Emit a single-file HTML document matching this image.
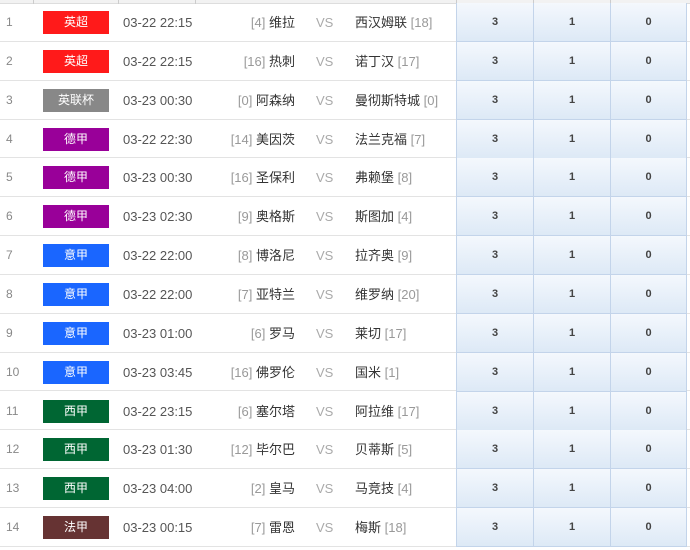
<!DOCTYPE html>
<html><head><meta charset="utf-8"><style>
*{margin:0;padding:0;box-sizing:border-box}
body{width:690px;height:550px;background:#fff;position:relative;overflow:hidden;font-family:"Liberation Sans","Noto Sans CJK SC",sans-serif;font-size:13px;color:#333}
.hd{position:absolute;left:0;top:0;width:690px;height:4px;background:#f2f2f2;border-bottom:1px solid #ddd}
.hd i{position:absolute;top:0;width:1px;height:4px;background:#ccc}
.r{position:absolute;left:0;width:690px;height:38.85px;border-bottom:1px solid #e3e3e3}
.r>*{position:absolute;top:0;line-height:39px}
.n{left:6px;color:#888;font-size:12px}
.b{left:43px;top:8px!important;width:66px;height:23px;line-height:23px!important;color:#fff;text-align:center;font-size:12px}
.t{left:123px;color:#555}
.h{right:395px;color:#333;white-space:nowrap}
.v{left:316px;color:#aaa}
.a{left:355px;color:#333;white-space:nowrap}
.g{color:#999}
.o{width:77px;height:39px;background:linear-gradient(#f4f8fd,#dde9f6);border-left:1px solid #c3d4ea;border-bottom:1px solid #c3d4ea;text-align:center;font-weight:bold;font-size:11px;color:#444}
.o1{left:456px}.o2{left:533px}.o3{left:610px;border-right:1px solid #c3d4ea}
.red{background:#ff1a1a}.gr{background:#888}.pu{background:#990099}.bl{background:#1a66ff}.gn{background:#006633}.br{background:#663333}
</style></head><body>
<div class="hd"><i style="left:33px"></i><i style="left:118px"></i><i style="left:195px"></i><i style="left:456px"></i><i style="left:533px"></i><i style="left:610px"></i></div>

<div class="r" style="top:3px"><span class="n">1</span><span class="b red">英超</span><span class="t">03-22 22:15</span><span class="h"><span class="g">[4]</span> 维拉</span><span class="v">VS</span><span class="a">西汉姆联 <span class="g">[18]</span></span><span class="o o1">3</span><span class="o o2">1</span><span class="o o3">0</span></div>
<div class="r" style="top:41.85px"><span class="n">2</span><span class="b red">英超</span><span class="t">03-22 22:15</span><span class="h"><span class="g">[16]</span> 热刺</span><span class="v">VS</span><span class="a">诺丁汉 <span class="g">[17]</span></span><span class="o o1">3</span><span class="o o2">1</span><span class="o o3">0</span></div>
<div class="r" style="top:80.7px"><span class="n">3</span><span class="b gr">英联杯</span><span class="t">03-23 00:30</span><span class="h"><span class="g">[0]</span> 阿森纳</span><span class="v">VS</span><span class="a">曼彻斯特城 <span class="g">[0]</span></span><span class="o o1">3</span><span class="o o2">1</span><span class="o o3">0</span></div>
<div class="r" style="top:119.55px"><span class="n">4</span><span class="b pu">德甲</span><span class="t">03-22 22:30</span><span class="h"><span class="g">[14]</span> 美因茨</span><span class="v">VS</span><span class="a">法兰克福 <span class="g">[7]</span></span><span class="o o1">3</span><span class="o o2">1</span><span class="o o3">0</span></div>
<div class="r" style="top:158.4px"><span class="n">5</span><span class="b pu">德甲</span><span class="t">03-23 00:30</span><span class="h"><span class="g">[16]</span> 圣保利</span><span class="v">VS</span><span class="a">弗赖堡 <span class="g">[8]</span></span><span class="o o1">3</span><span class="o o2">1</span><span class="o o3">0</span></div>
<div class="r" style="top:197.25px"><span class="n">6</span><span class="b pu">德甲</span><span class="t">03-23 02:30</span><span class="h"><span class="g">[9]</span> 奥格斯</span><span class="v">VS</span><span class="a">斯图加 <span class="g">[4]</span></span><span class="o o1">3</span><span class="o o2">1</span><span class="o o3">0</span></div>
<div class="r" style="top:236.1px"><span class="n">7</span><span class="b bl">意甲</span><span class="t">03-22 22:00</span><span class="h"><span class="g">[8]</span> 博洛尼</span><span class="v">VS</span><span class="a">拉齐奥 <span class="g">[9]</span></span><span class="o o1">3</span><span class="o o2">1</span><span class="o o3">0</span></div>
<div class="r" style="top:274.95px"><span class="n">8</span><span class="b bl">意甲</span><span class="t">03-22 22:00</span><span class="h"><span class="g">[7]</span> 亚特兰</span><span class="v">VS</span><span class="a">维罗纳 <span class="g">[20]</span></span><span class="o o1">3</span><span class="o o2">1</span><span class="o o3">0</span></div>
<div class="r" style="top:313.8px"><span class="n">9</span><span class="b bl">意甲</span><span class="t">03-23 01:00</span><span class="h"><span class="g">[6]</span> 罗马</span><span class="v">VS</span><span class="a">莱切 <span class="g">[17]</span></span><span class="o o1">3</span><span class="o o2">1</span><span class="o o3">0</span></div>
<div class="r" style="top:352.65px"><span class="n">10</span><span class="b bl">意甲</span><span class="t">03-23 03:45</span><span class="h"><span class="g">[16]</span> 佛罗伦</span><span class="v">VS</span><span class="a">国米 <span class="g">[1]</span></span><span class="o o1">3</span><span class="o o2">1</span><span class="o o3">0</span></div>
<div class="r" style="top:391.5px"><span class="n">11</span><span class="b gn">西甲</span><span class="t">03-22 23:15</span><span class="h"><span class="g">[6]</span> 塞尔塔</span><span class="v">VS</span><span class="a">阿拉维 <span class="g">[17]</span></span><span class="o o1">3</span><span class="o o2">1</span><span class="o o3">0</span></div>
<div class="r" style="top:430.35px"><span class="n">12</span><span class="b gn">西甲</span><span class="t">03-23 01:30</span><span class="h"><span class="g">[12]</span> 毕尔巴</span><span class="v">VS</span><span class="a">贝蒂斯 <span class="g">[5]</span></span><span class="o o1">3</span><span class="o o2">1</span><span class="o o3">0</span></div>
<div class="r" style="top:469.2px"><span class="n">13</span><span class="b gn">西甲</span><span class="t">03-23 04:00</span><span class="h"><span class="g">[2]</span> 皇马</span><span class="v">VS</span><span class="a">马竞技 <span class="g">[4]</span></span><span class="o o1">3</span><span class="o o2">1</span><span class="o o3">0</span></div>
<div class="r" style="top:508.05px"><span class="n">14</span><span class="b br">法甲</span><span class="t">03-23 00:15</span><span class="h"><span class="g">[7]</span> 雷恩</span><span class="v">VS</span><span class="a">梅斯 <span class="g">[18]</span></span><span class="o o1">3</span><span class="o o2">1</span><span class="o o3">0</span></div>
</body></html>
